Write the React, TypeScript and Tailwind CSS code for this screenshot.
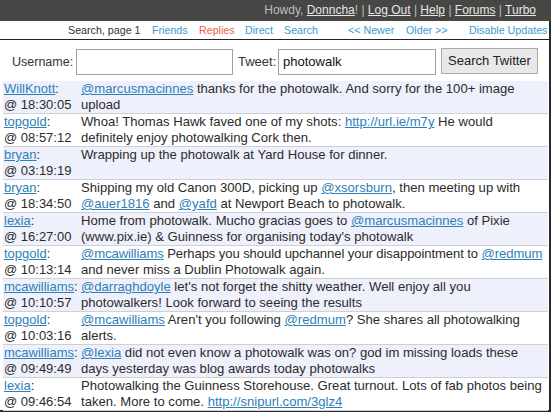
import React from "react";

type Part = string | { l: string };
type Row = { user: string; time: string; lines: Part[][]; tight?: boolean };

const rows: Row[] = [
  { user: "WillKnott", time: "18:30:05", lines: [[{ l: "@marcusmacinnes" }, " thanks for the photowalk. And sorry for the 100+ image"], ["upload"]] },
  { user: "topgold", time: "08:57:12", lines: [["Whoa! Thomas Hawk faved one of my shots: ", { l: "http://url.ie/m7y" }, " He would"], ["definitely enjoy photowalking Cork then."]] },
  { user: "bryan", time: "03:19:19", lines: [["Wrapping up the photowalk at Yard House for dinner."]] },
  { user: "bryan", time: "18:34:50", lines: [["Shipping my old Canon 300D, picking up ", { l: "@xsorsburn" }, ", then meeting up with"], [{ l: "@auer1816" }, " and ", { l: "@yafd" }, " at Newport Beach to photowalk."]] },
  { user: "lexia", time: "16:27:00", lines: [["Home from photowalk. Mucho gracias goes to ", { l: "@marcusmacinnes" }, " of Pixie"], ["(www.pix.ie) & Guinness for organising today's photowalk"]] },
  { user: "topgold", time: "10:13:14", tight: true, lines: [[{ l: "@mcawilliams" }, " Perhaps you should upchannel your disappointment to ", { l: "@redmum" }], ["and never miss a Dublin Photowalk again."]] },
  { user: "mcawilliams", time: "10:10:57", lines: [[{ l: "@darraghdoyle" }, " let's not forget the shitty weather. Well enjoy all you"], ["photowalkers! Look forward to seeing the results"]] },
  { user: "topgold", time: "10:03:16", lines: [[{ l: "@mcawilliams" }, " Aren't you following ", { l: "@redmum" }, "? She shares all photowalking"], ["alerts."]] },
  { user: "mcawilliams", time: "09:49:49", lines: [[{ l: "@lexia" }, " did not even know a photowalk was on? god im missing loads these"], ["days yesterday was blog awards today photowalks"]] },
  { user: "lexia", time: "09:46:54", lines: [["Photowalking the Guinness Storehouse. Great turnout. Lots of fab photos being"], ["taken. More to come. ", { l: "http://snipurl.com/3glz4" }]] },
];

export default function App() {
  return (
    <div className="w-[551px] h-[412px] overflow-hidden bg-white font-['Liberation_Sans',Arial,sans-serif] text-[#2b2b2b]">
      <div className="h-[21px] bg-[#464744] flex items-center justify-end pr-[15px]">
        <div className="text-[12px] text-[#bdbdbd] whitespace-nowrap leading-[21px]">
          Howdy, <a className="underline text-[#e6e6e6]">Donncha</a>! | <a className="underline text-[#e6e6e6]">Log Out</a> | <a className="underline text-[#e6e6e6]">Help</a> | <a className="underline text-[#e6e6e6]">Forums</a> | <a className="underline text-[#e6e6e6]">Turbo</a>
        </div>
      </div>
      <div className="h-[391px] border-r-2 border-b-2 border-[#2a2a2a] flex flex-col">
        <div className="h-[19px] shrink-0 border-b border-[#222] flex items-center pl-[68px] text-[10.7px] text-[#3a9bd0] whitespace-nowrap">
          <span className="w-[84px] text-[#333]">Search, page 1</span>
          <span className="w-[47px]">Friends</span>
          <span className="w-[46px] text-[#e8604c]">Replies</span>
          <span className="w-[39px]">Direct</span>
          <span className="w-[64px]">Search</span>
          <span className="w-[58px]">&lt;&lt; Newer</span>
          <span className="w-[63px]">Older &gt;&gt;</span>
          <span>Disable Updates</span>
        </div>
        <div className="h-[41px] shrink-0 flex items-start pt-[9px] text-[13px] text-[#333]">
          <span className="ml-[12px] w-[64px] leading-[26px] text-[12.5px]">Username:</span>
          <div className="w-[157px] h-[26px] border border-[#a0a0a0] bg-white" />
          <span className="ml-[5px] w-[40px] leading-[26px]">Tweet:</span>
          <div className="w-[158px] h-[26px] border border-[#a0a0a0] bg-white flex items-center pl-[4px] text-[#111]">photowalk</div>
          <div className="ml-[5px] -mt-[1px] w-[97px] h-[26px] border border-[#aaa] bg-[#e8e8e8] flex items-center justify-center text-[#222]">Search Twitter</div>
        </div>
        <div className="flex flex-col ml-[3px] mr-[1px]">
          {rows.map((r, i) => (
            <div
              key={i}
              className={`flex border-b border-[#cfcfd8] leading-[16px] ${i % 2 === 0 ? "bg-[#eef0fc]" : "bg-white"}`}
            >
              <div className="w-[78px] shrink-0 pl-[1px] whitespace-nowrap text-[13px]">
                <div><a className="text-[#2f80b8] underline decoration-[#2f80b8]">{r.user}</a>:</div>
                <div>@ {r.time}</div>
              </div>
              <div className="flex-1 min-w-0 min-h-[32px] text-[13.1px]">
                {r.lines.map((line, k) => (
                  <div key={k} className={`whitespace-pre ${r.tight && k === 0 ? "tracking-[-0.1px]" : ""}`}>
                    {line.map((p, j) =>
                      typeof p === "string" ? (
                        <span key={j}>{p}</span>
                      ) : (
                        <a key={j} className="text-[#2f80b8] underline">{p.l}</a>
                      )
                    )}
                  </div>
                ))}
              </div>
            </div>
          ))}
        </div>
      </div>
    </div>
  );
}
